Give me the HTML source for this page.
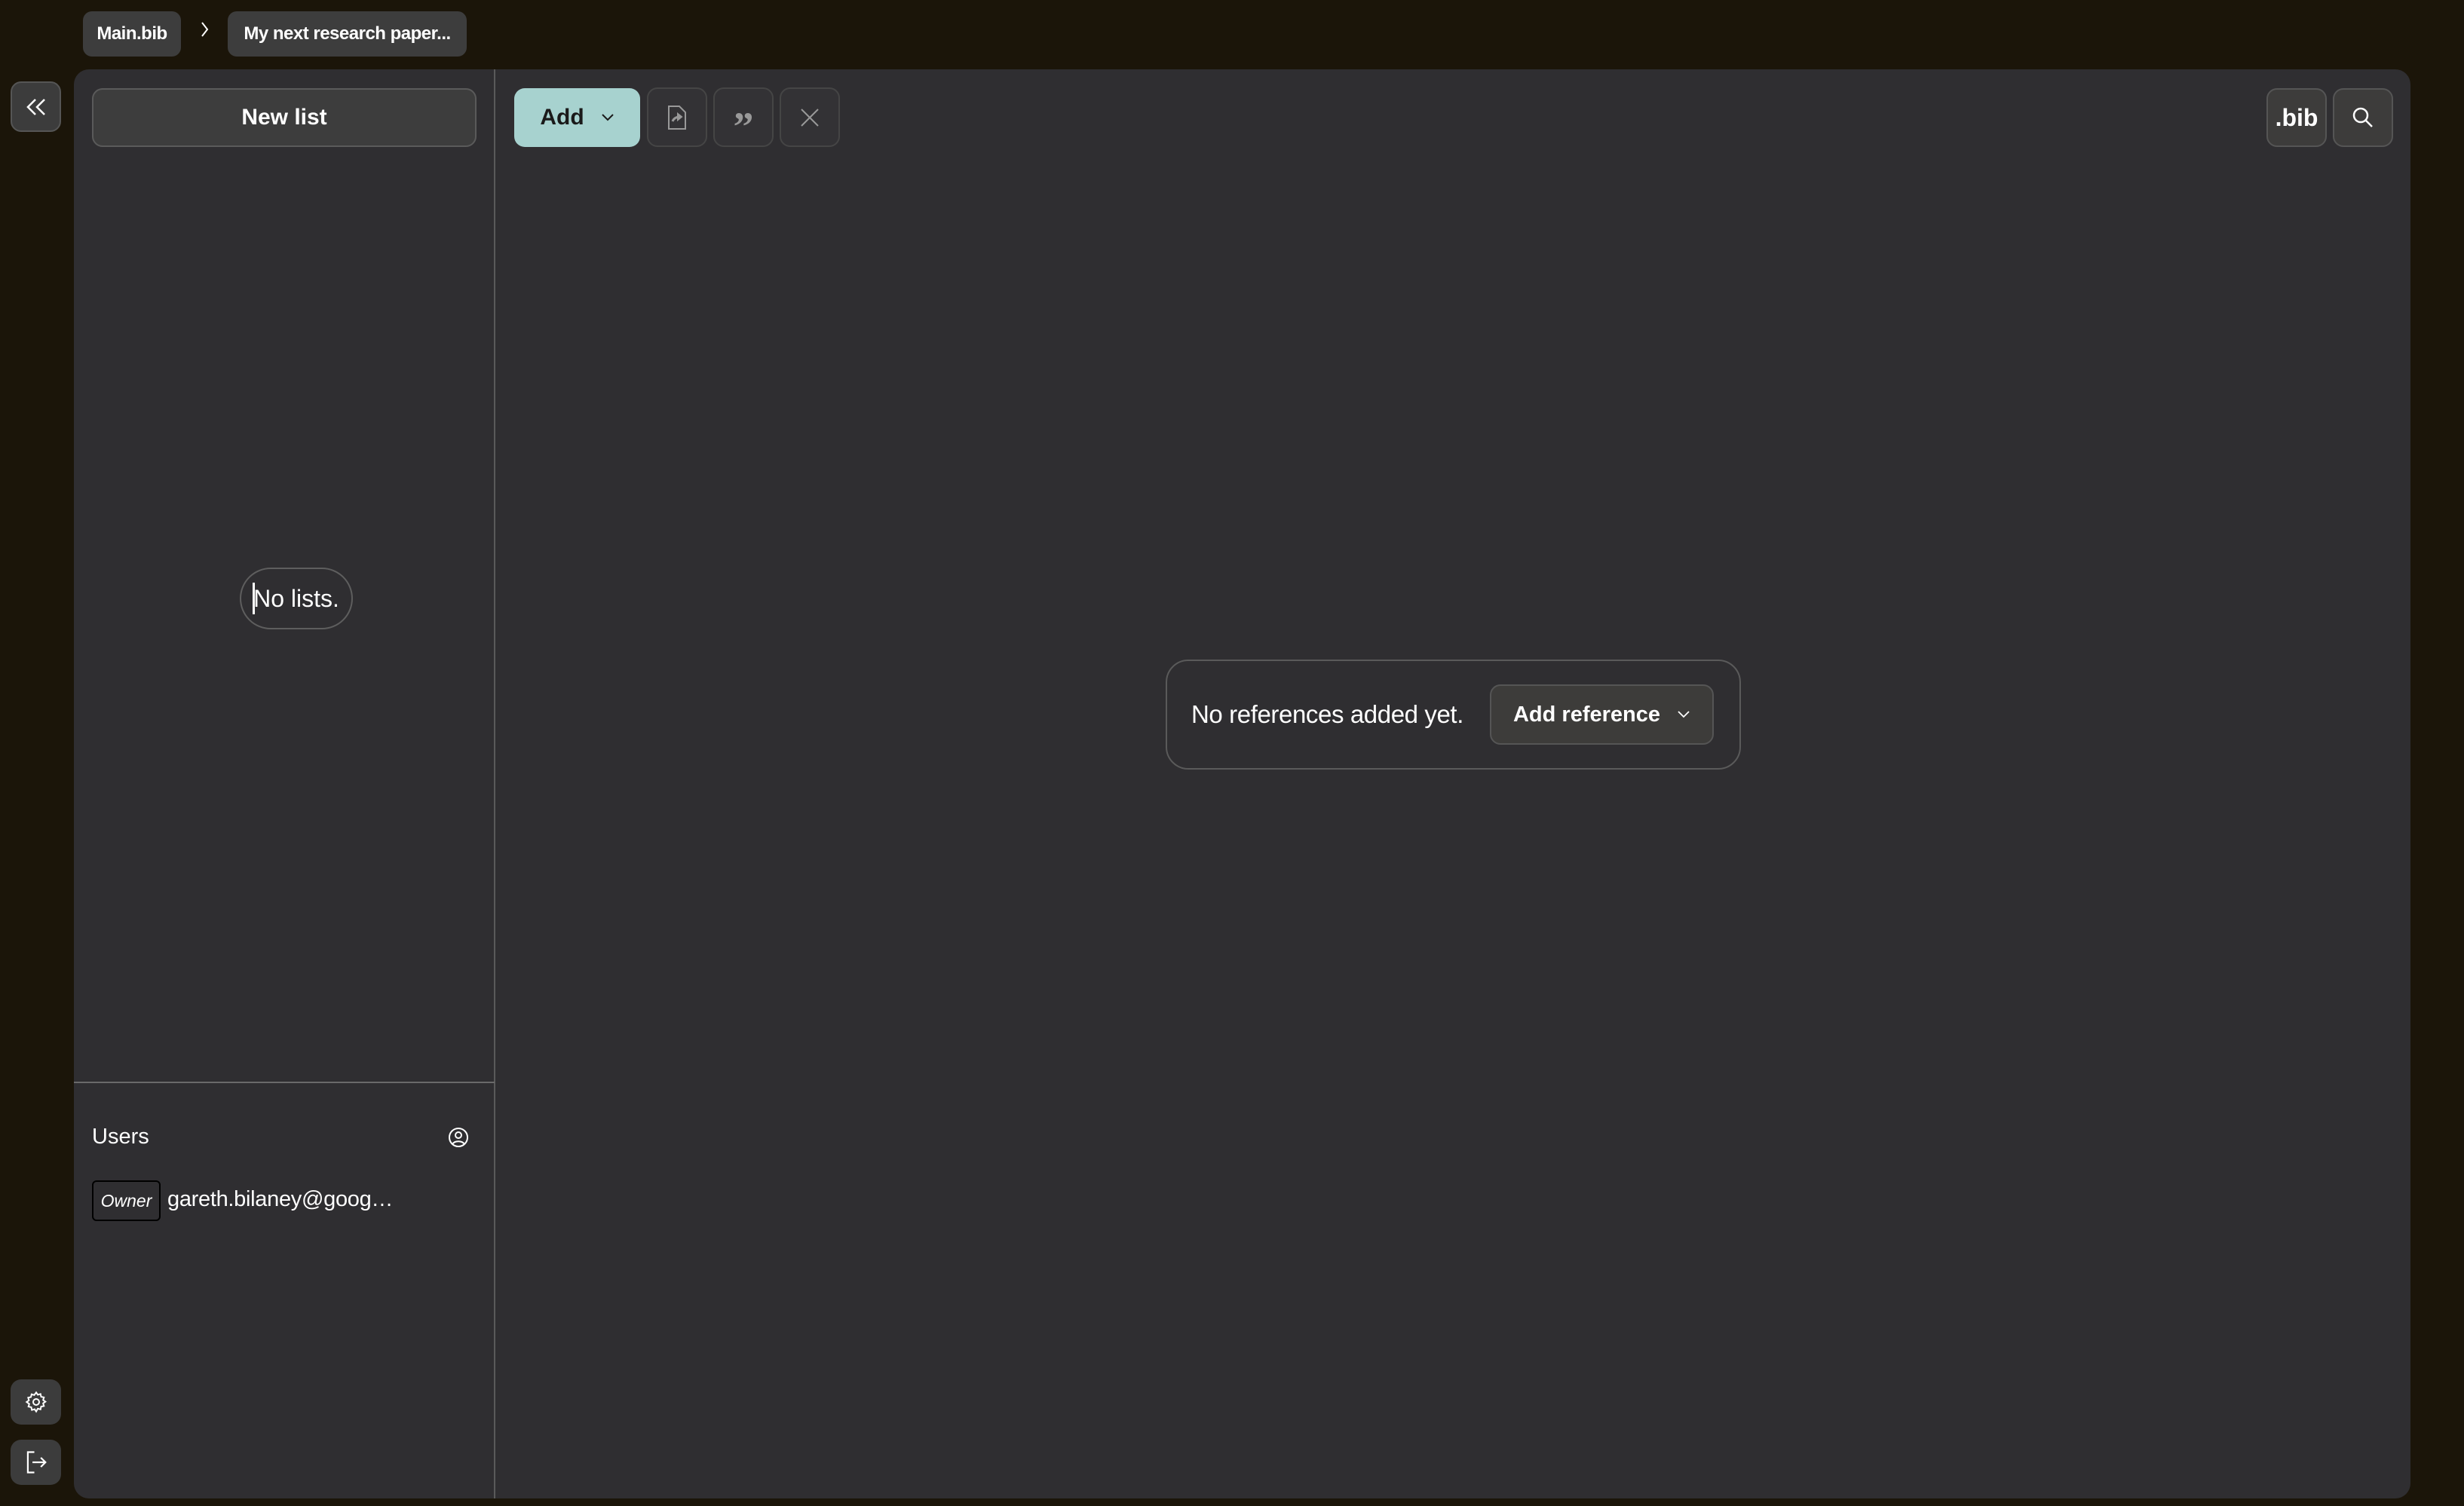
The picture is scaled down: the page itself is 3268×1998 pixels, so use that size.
<!DOCTYPE html>
<html><head><meta charset="utf-8"><style>
*{box-sizing:border-box;margin:0;padding:0}
body{width:3268px;height:1998px;background:#1b1509;font-family:"Liberation Sans",sans-serif;color:#fff;position:relative;overflow:hidden}
.a{position:absolute}
.crumb{position:absolute;top:15px;height:60px;background:#3d3d3d;border-radius:12px;font-weight:bold;font-size:24px;display:flex;align-items:center;justify-content:center;letter-spacing:-0.5px}
.side{position:absolute;left:14px;width:67px;background:#3c3c3c;border-radius:14px;display:flex;align-items:center;justify-content:center}
.panel{position:absolute;left:98px;top:92px;width:3099px;height:1896px;background:#2f2e31;border-radius:20px}
.ib{position:absolute;top:116px;width:80px;height:79px;border:2px solid #454545;background:#333235;border-radius:14px;display:flex;align-items:center;justify-content:center}
.rb{position:absolute;top:117px;width:80px;height:78px;border:2px solid #555;background:#3d3c3b;border-radius:14px;display:flex;align-items:center;justify-content:center}
</style></head><body>
<div class="crumb" style="left:110px;width:130px">Main.bib</div>
<svg class="a" style="left:265px;top:28px" width="14" height="22"><path d="M3 2 L10 11 L3 20" stroke="#fff" stroke-width="2" fill="none"/></svg>
<div class="crumb" style="left:302px;width:317px">My next research paper...</div>
<div class="side" style="top:108px;height:67px;border:2px solid #555"><svg width="30" height="24"><path d="M14 2 L4 12 L14 22 M26 2 L16 12 L26 22" stroke="#fff" stroke-width="2.5" fill="none"/></svg></div>
<div class="side" style="top:1830px;height:60px"><svg width="32" height="32" viewBox="0 0 24 24" fill="none" stroke="#fff" stroke-width="1.5"><circle cx="12" cy="12" r="3"/><path d="M12 2.5l1.6 2.3 2.7-.8.6 2.8 2.8.6-.8 2.7 2.3 1.6-2.3 1.6.8 2.7-2.8.6-.6 2.8-2.7-.8L12 21.5l-1.6-2.3-2.7.8-.6-2.8-2.8-.6.8-2.7L2.5 12l2.3-1.6-.8-2.7 2.8-.6.6-2.8 2.7.8z"/></svg></div>
<div class="side" style="top:1910px;height:60px"><svg width="30" height="32" viewBox="0 0 24 26" fill="none" stroke="#fff" stroke-width="1.8"><path d="M10 2H3v22h7M8 13h14M17 8l5 5-5 5"/></svg></div>
<div class="panel"></div>
<div class="a" style="left:655px;top:92px;width:2px;height:1896px;background:#5a5a5a"></div>
<div class="a" style="left:98px;top:1435px;width:558px;height:2px;background:#6a6a6a"></div>
<div class="a" style="left:122px;top:117px;width:510px;height:78px;background:#3d3d3d;border:2px solid #5a5a5a;border-radius:14px;display:flex;align-items:center;justify-content:center;font-weight:bold;font-size:30px">New list</div>
<div class="a" style="left:682px;top:117px;width:167px;height:78px;background:#a7d2cf;border-radius:14px;display:flex;align-items:center;justify-content:center;font-weight:bold;font-size:30px;color:#1a1a1a">Add<svg style="margin-left:22px" width="18" height="12"><path d="M2 2 L9 9 L16 2" stroke="#1a1a1a" stroke-width="2" fill="none"/></svg></div>
<div class="ib" style="left:858px"><svg width="26" height="34" viewBox="0 0 26 34" fill="none" stroke="#999" stroke-width="2"><path d="M2 2h14l8 8v22H2z"/><path d="M7 22c2-5 6-6 10-6" stroke-width="3"/><path d="M14 12l5 4-5 4z" fill="#999"/></svg></div>
<div class="ib" style="left:946px"><span style="color:#999;font-size:54px;font-weight:bold;font-family:'Liberation Serif',serif;margin-top:24px">”</span></div>
<div class="ib" style="left:1034px"><svg width="26" height="26"><path d="M2 2L24 24M24 2L2 24" stroke="#999" stroke-width="2"/></svg></div>
<div class="rb" style="left:3006px;font-weight:bold;font-size:32px">.bib</div>
<div class="rb" style="left:3094px"><svg width="30" height="30" fill="none" stroke="#fff" stroke-width="2.5"><circle cx="12" cy="12" r="9"/><path d="M19 19l8 8"/></svg></div>
<div class="a" style="left:318px;top:753px;width:150px;height:82px;border:2px solid #5e5e5e;border-radius:41px;display:flex;align-items:center;justify-content:center;font-size:32px;font-weight:300">No lists.</div>
<div class="a" style="left:335px;top:773px;width:3px;height:42px;background:#fff"></div>
<div class="a" style="left:1546px;top:875px;width:763px;height:146px;border:2px solid #5a5a5a;border-radius:30px"></div>
<div class="a" style="left:1580px;top:926px;font-size:33px;line-height:44px;font-weight:300;letter-spacing:-0.4px">No references added yet.</div>
<div class="a" style="left:1976px;top:908px;width:297px;height:80px;background:#3d3c3a;border:2px solid #555;border-radius:14px;display:flex;align-items:center;justify-content:center;font-weight:bold;font-size:29px">Add reference<svg style="margin-left:22px" width="18" height="12"><path d="M2 2 L9 9 L16 2" stroke="#fff" stroke-width="1.8" fill="none"/></svg></div>
<div class="a" style="left:122px;top:1492px;font-size:29px">Users</div>
<svg class="a" style="left:594px;top:1495px" width="28" height="28" fill="none" stroke="#fff" stroke-width="2"><circle cx="14" cy="14" r="12"/><circle cx="14" cy="11" r="4"/><path d="M6 23c3-5 13-5 16 0"/></svg>
<div class="a" style="left:122px;top:1566px;width:91px;height:54px;border:2px solid #000;border-radius:6px;display:flex;align-items:center;justify-content:center;font-style:italic;font-size:23px;font-weight:300">Owner</div>
<div class="a" style="left:222px;top:1575px;font-size:29px;font-weight:300;letter-spacing:-0.3px">gareth.bilaney@goog…</div>
</body></html>
